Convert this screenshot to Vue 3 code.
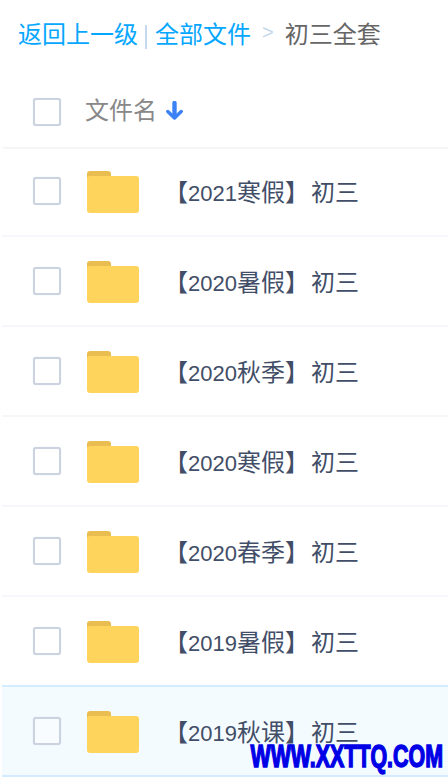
<script setup>
const rows = [
  { year: '2021', rest: '寒假' },
  { year: '2020', rest: '暑假' },
  { year: '2020', rest: '秋季' },
  { year: '2020', rest: '寒假' },
  { year: '2020', rest: '春季' },
  { year: '2019', rest: '暑假' },
  { year: '2019', rest: '秋课', active: true },
]
</script>

<template>
  <div class="page">
    <nav class="crumbs">
      <a class="link">返回上一级</a>
      <span class="pipe"></span>
      <a class="link">全部文件</a>
      <span class="gt">&gt;</span>
      <span class="current">初三全套</span>
    </nav>
    <div class="head">
      <span class="check head-check"></span>
      <span class="title">文件名</span>
      <svg class="arrow" width="17" height="19" viewBox="0 0 17 19">
        <path d="M8.5 2V15" stroke="#3b82f6" stroke-width="4.4" fill="none" stroke-linecap="round" />
        <path d="M1.8 10.5L8.5 17l6.7-6.5" stroke="#3b82f6" stroke-width="3.4" fill="none" stroke-linecap="round" stroke-linejoin="round" />
      </svg>
    </div>
    <div v-for="row in rows" :key="row.year + row.rest" class="row" :class="{ active: row.active }">
      <span class="check"></span>
      <svg class="folder" width="52" height="43" viewBox="0 0 52 43">
        <path d="M0 4a3 3 0 0 1 3-3h18a3 3 0 0 1 3 3v5H0z" fill="#e9bd50" />
        <rect x="0" y="6" width="52" height="37" rx="3" fill="#ffd45c" />
      </svg>
      <span class="name">【<span class="year">{{ row.year }}</span>{{ row.rest }}】<span class="tail">初三</span></span>
    </div>
    <div class="mark">WWW.XXTTQ.COM</div>
  </div>
</template>

<style>
html, body { margin: 0; background: #fff; }
</style>

<style scoped>
.page {
  position: relative;
  width: 448px;
  height: 778px;
  overflow: hidden;
  background: #fff;
  font-family: "Noto Sans CJK SC", "Liberation Sans", sans-serif;
  font-size: 24px;
}
.crumbs {
  height: 68px;
  padding: 0 0 4px 18px;
  display: flex;
  align-items: center;
  box-sizing: border-box;
}
.link { color: #06a7ff; }
.pipe {
  width: 2px;
  height: 24px;
  margin: 9px 8px 0 7px;
  background: #c6d8ee;
}
.gt {
  margin: 0 11px 0 11px;
  color: #c6d8ee;
  font-size: 20px;
  font-family: "Liberation Sans", sans-serif;
}
.current { color: #666; }
.head {
  height: 81px;
  margin-left: 2px;
  padding: 0 0 2px 31px;
  display: flex;
  align-items: center;
  box-sizing: border-box;
  border-bottom: 2px solid #f5f6f8;
  border-bottom-left-radius: 4px;
}
.head-check { margin-top: 11px; }
.title { margin: 3px 0 0 24px; color: #888; }
.arrow { margin: 7px 0 0 9px; }
.check {
  flex: none;
  width: 28px;
  height: 28px;
  box-sizing: border-box;
  border: 2px solid #cbd3e1;
  border-radius: 3px;
  background: #fff;
  box-shadow: 0 0 1px #cbd3e1;
}
.row {
  height: 90px;
  margin-left: 2px;
  padding-left: 31px;
  display: flex;
  align-items: center;
  box-sizing: border-box;
  border-bottom: 2px solid #f5f7fb;
}
.head + .row {
  height: 88px;
  padding-bottom: 2px;
}
.row.active {
  height: 92px;
  margin-top: -2px;
  background: #f4fbff;
  border-top: 2px solid #d3ecff;
  border-bottom: 2px solid #d3ecff;
}
.row.active .check { background: #f9fcff; }
.folder { flex: none; margin-left: 26px; }
.name {
  margin: 0 0 2px 25px;
  color: #424e67;
  white-space: nowrap;
}
.year {
  font-family: "Liberation Sans", sans-serif;
  font-size: 22px;
}
.tail { margin-left: 2px; }
.mark {
  position: absolute;
  right: 5px;
  bottom: 5px;
  color: #0000e6;
  font-family: "Liberation Sans", sans-serif;
  font-weight: 700;
  font-size: 31px;
  line-height: 32px;
  white-space: nowrap;
  -webkit-text-stroke: 1.5px #0000e6;
  transform: scaleX(0.69);
  transform-origin: right center;
}
</style>
